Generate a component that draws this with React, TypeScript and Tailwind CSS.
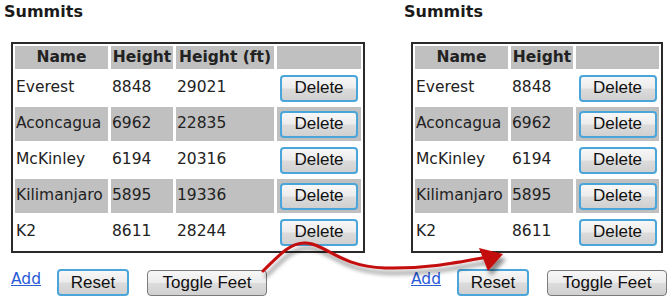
import React from "react";

type Row = { name: string; m: number; ft: number };
const rows: Row[] = [
  { name: "Everest", m: 8848, ft: 29021 },
  { name: "Aconcagua", m: 6962, ft: 22835 },
  { name: "McKinley", m: 6194, ft: 20316 },
  { name: "Kilimanjaro", m: 5895, ft: 19336 },
  { name: "K2", m: 8611, ft: 28244 },
];

const font = { fontFamily: '"DejaVu Sans", Verdana, sans-serif' };
const btnFont = { fontFamily: '"Liberation Sans", Arial, sans-serif' };

function Btn({ label, blue, w, h }: { label: string; blue?: boolean; w: string; h: string }) {
  return (
    <div
      style={btnFont}
      className={
        "flex items-center justify-center rounded-[4px] text-[17px] text-[#111] bg-[linear-gradient(#f7f7f7_0%,#ececec_48%,#dcdcdc_52%,#d0d0d0_100%)] " +
        (blue ? "border-2 border-[#4aa6da] " : "border border-[#7a7a7a] ") +
        w +
        " " +
        h
      }
    >
      {label}
    </div>
  );
}

function Panel({ feet }: { feet: boolean }) {
  const cols = feet ? ["w-[93px]", "w-[62px]", "w-[98px]", "w-[84px]"] : ["w-[93px]", "w-[62px]", "w-[83px]"];
  return (
    <div className="flex flex-col shrink-0 pl-[4px] pt-[2px] w-[400px]" style={font}>
      <div className="h-[19px] text-[16px] font-bold text-[#1a1a1a] leading-[19px]">Summits</div>
      <div className="ml-[7px] mt-[21px] w-fit border-2 border-[#2a2a2a] p-[2px] flex flex-col gap-[2px] text-[15.5px] text-[#222]">
        <div className="flex gap-[3px] h-[23px]">
          <div className={cols[0] + " bg-[#c0c0c0] flex items-center justify-center font-bold"}>Name</div>
          <div className={cols[1] + " bg-[#c0c0c0] flex items-center justify-center font-bold"}>Height</div>
          {feet && (
            <div className={cols[2] + " bg-[#c0c0c0] flex items-center justify-center font-bold whitespace-nowrap"}>
              Height (ft)
            </div>
          )}
          <div className={cols[cols.length - 1] + " bg-[#c0c0c0]"}></div>
        </div>
        {rows.map((r, i) => {
          const bg = i % 2 === 1 ? "bg-[#c0c0c0]" : "bg-white";
          return (
            <div key={r.name} className="flex gap-[3px] h-[34px]">
              <div className={cols[0] + " " + bg + " flex items-center pl-[1px] whitespace-nowrap"}>{r.name}</div>
              <div className={cols[1] + " " + bg + " flex items-center pl-[1px]"}>{r.m}</div>
              {feet && <div className={cols[2] + " " + bg + " flex items-center pl-[1px]"}>{r.ft}</div>}
              <div className={cols[cols.length - 1] + " " + bg + " flex items-center justify-center"}>
                <Btn label="Delete" blue w="w-[78px]" h="h-[27px]" />
              </div>
            </div>
          );
        })}
      </div>
      <div className="ml-[7px] mt-[16px] flex items-start">
        <a className="text-[15.5px] text-[#2a5bd7] underline mt-[1px] leading-[19px]" href="#">
          Add
        </a>
        <div className="ml-[16px]">
          <Btn label="Reset" blue w="w-[72px]" h="h-[27px]" />
        </div>
        <div className="ml-[18px] mt-[1px]">
          <Btn label="Toggle Feet" w="w-[120px]" h="h-[26px]" />
        </div>
      </div>
    </div>
  );
}

export default function App() {
  return (
    <div className="relative w-[672px] h-[303px] bg-white overflow-hidden flex">
      <Panel feet />
      <Panel feet={false} />
      <svg className="absolute left-0 top-0 pointer-events-none" width="672" height="303">
        <defs>
          <filter id="sh" x="-20%" y="-50%" width="140%" height="200%">
            <feDropShadow dx="3" dy="5" stdDeviation="2.2" floodColor="#000" floodOpacity="0.45" />
          </filter>
        </defs>
        <g filter="url(#sh)">
          <path
            d="M 263 271 C 282 252, 292 242, 306 243 C 326 244, 338 266, 385 268 C 425 269, 455 263, 488 257"
            fill="none"
            stroke="#c40a0a"
            strokeWidth="3"
            strokeLinecap="round"
          />
          <polygon points="503,254 479,248 488,271" fill="#c40a0a" />
        </g>
      </svg>
    </div>
  );
}
